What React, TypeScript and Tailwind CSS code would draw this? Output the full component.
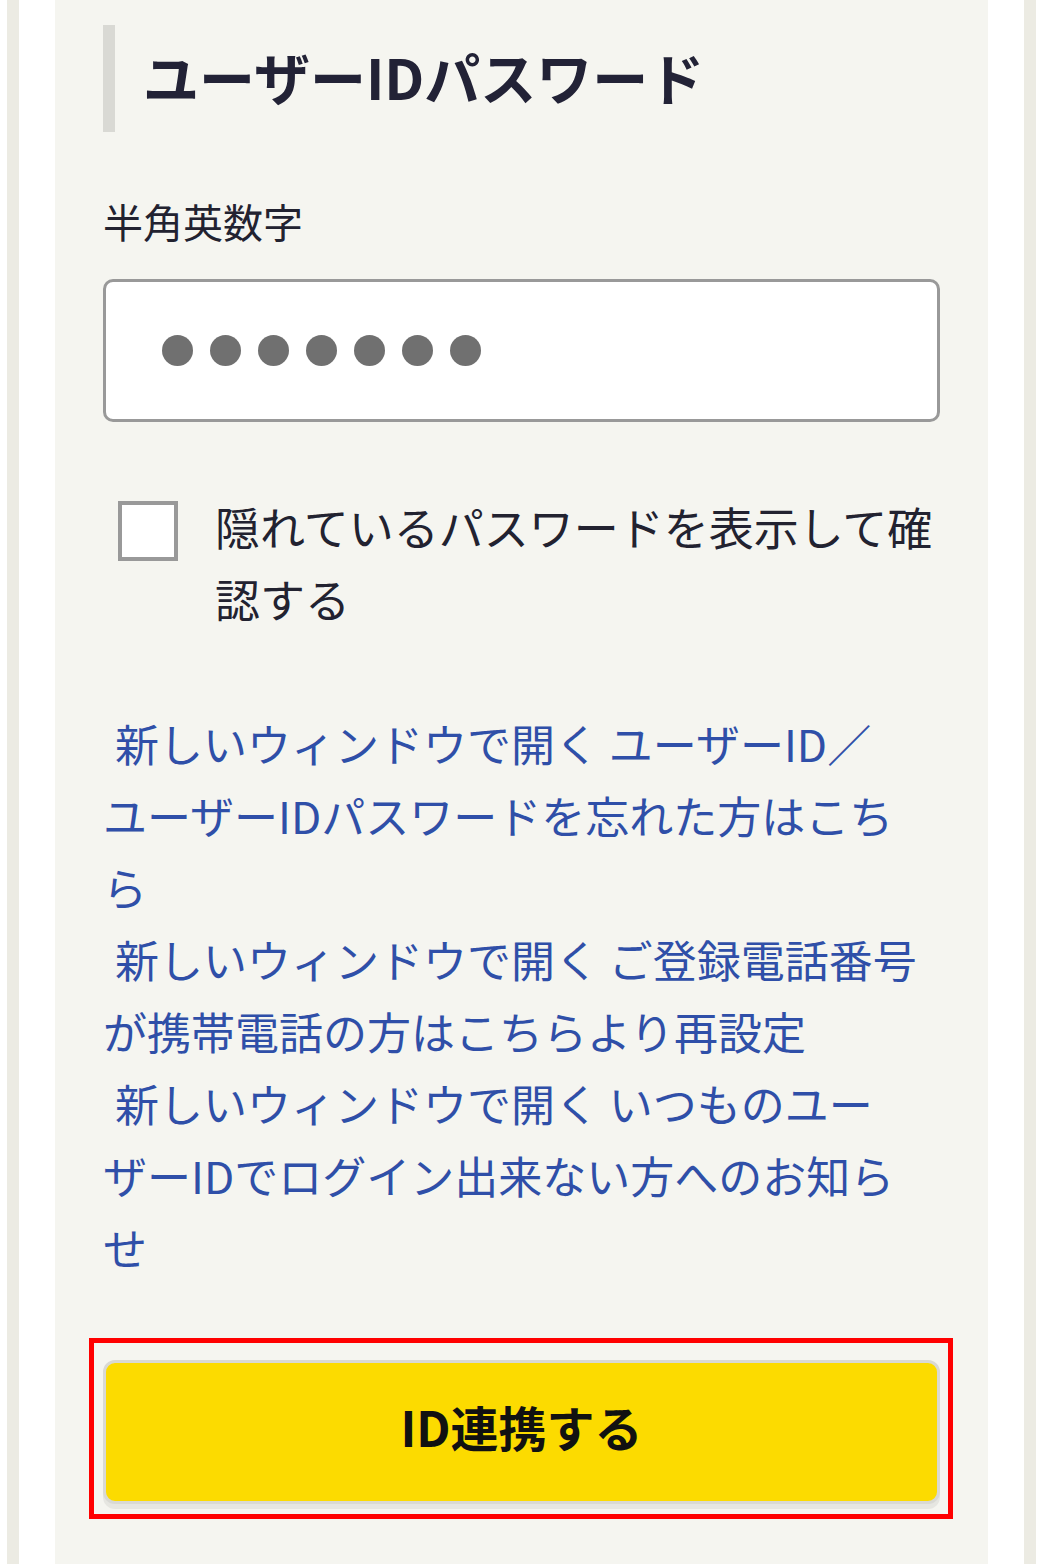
import React from 'react';

const font = { fontFamily: '"Noto Sans CJK JP", "Noto Sans", sans-serif' };

const links: string[][] = [
  ['新しいウィンドウで開く ユーザーID／', 'ユーザーIDパスワードを忘れた方はこち', 'ら'],
  ['新しいウィンドウで開く ご登録電話番号', 'が携帯電話の方はこちらより再設定'],
  ['新しいウィンドウで開く いつものユー', 'ザーIDでログイン出来ない方へのお知ら', 'せ'],
];

const App: React.FC = () => {
  return (
    <div className="flex w-[1042px] h-[1564px] overflow-hidden bg-white" style={font}>
      {/* outer frame stripes */}
      <div className="w-[7px] shrink-0" />
      <div className="w-[12px] shrink-0 bg-[#ecebe3]" />
      <div className="w-[36px] shrink-0" />

      {/* main panel */}
      <div className="w-[933px] shrink-0 bg-[#f5f5f0] pt-[25px] px-[48px]">
        {/* section title */}
        <div className="flex items-center h-[107px] border-l-[12px] border-[#d9d9d4] pl-[28px] pb-[6px]">
          <h2 className="text-[56px] font-bold leading-none text-[#222236] whitespace-nowrap">
            ユーザーIDパスワード
          </h2>
        </div>

        {/* label */}
        <p className="mt-[59px] text-[40px] leading-[60px] text-[#222230]">半角英数字</p>

        {/* password input */}
        <div className="mt-[28px] h-[143px] flex items-center gap-[17px] pl-[56px] bg-white border-[3px] border-[#999999] rounded-[10px]">
          {[0, 1, 2, 3, 4, 5, 6].map((i) => (
            <span key={i} className="w-[31px] h-[31px] rounded-full bg-[#707070]" />
          ))}
        </div>

        {/* show password checkbox */}
        <div className="mt-[69px] flex items-start pl-[15px]">
          <span className="mt-[10px] w-[60px] h-[60px] shrink-0 bg-white border-[4px] border-[#999999]" />
          <p className="ml-[37px] text-[45px] leading-[72px] text-[#222230] whitespace-nowrap">
            隠れているパスワードを表示して確
            <br />
            認する
          </p>
        </div>

        {/* help links */}
        <div className="mt-[72px]">
          {links.map((lines, i) => (
            <a
              key={i}
              href="#"
              className="block text-[44px] leading-[72px] text-[#2f4fa8] indent-[12px] whitespace-nowrap no-underline"
            >
              {lines.map((line, j) => (
                <React.Fragment key={j}>
                  {j > 0 && <br />}
                  {line}
                </React.Fragment>
              ))}
            </a>
          ))}
        </div>

        {/* submit */}
        <div className="mt-[55px] -ml-[14px] -mr-[13px] border-[5px] border-[#ff0000] pt-[17px] pb-[10px] pl-[9px] pr-[8px]">
          <button
            type="button"
            className="w-full h-[144px] flex items-center justify-center pb-[12px] bg-[#fcdb00] border-[3px] border-[#d9d9d4] rounded-[12px] shadow-[0_5px_0_#e6e6e1] text-[48px] font-bold text-[#111111]"
            style={font}
          >
            ID連携する
          </button>
        </div>
      </div>

      <div className="w-[36px] shrink-0" />
      <div className="w-[12px] shrink-0 bg-[#ecebe3]" />
      <div className="w-[6px] shrink-0" />
    </div>
  );
};

export default App;
